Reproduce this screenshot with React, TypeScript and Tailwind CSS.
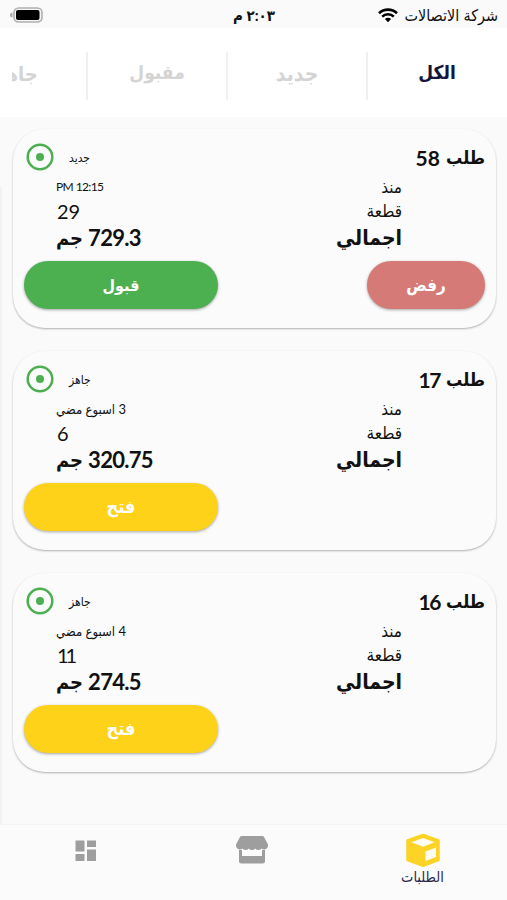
import { clsx } from 'clsx';

type Order = {
  id: number;
  status: string;
  since: string;
  pieces: number;
  total: string;
  isNew?: boolean;
};

const TABS = [
  { label: 'الكل', size: 'text-[19px]' },
  { label: 'جديد', size: 'text-[21px]' },
  { label: 'مقبول', size: 'text-[19px]' },
  { label: 'جاهز', size: 'text-[20px]' },
];

const ORDERS: Order[] = [
  { id: 58, status: 'جديد', since: '12:15 PM', pieces: 29, total: '729.3', isNew: true },
  { id: 17, status: 'جاهز', since: '3 اسبوع مضي', pieces: 6, total: '320.75' },
  { id: 16, status: 'جاهز', since: '4 اسبوع مضي', pieces: 11, total: '274.5' },
];

const StatusBar = () => (
  <div className="grid h-[28px] shrink-0 grid-cols-3 items-center bg-[#fafafa] pt-[2px] pr-[9px] pl-[10px] text-[#111]">
    <div className="flex items-center gap-[6px]">
      <span className="text-[16px] leading-none whitespace-nowrap">شركة الاتصالات</span>
      <svg className="shrink-0" width="20" height="15" viewBox="0 0 20 15" fill="none" stroke="#000">
        <path d="M1 5.2a13 13 0 0 1 18 0" strokeWidth="2.7" />
        <path d="M4.2 8.6a8.3 8.3 0 0 1 11.6 0" strokeWidth="2.7" />
        <path d="M10 14.2 6.9 11.1a4.4 4.4 0 0 1 6.2 0z" fill="#000" stroke="none" />
      </svg>
    </div>
    <span className="text-center text-[15px] leading-none font-bold">٢:٠٣ م</span>
    <div className="flex justify-end">
      <svg width="33" height="16" viewBox="0 0 33 16">
        <path d="M2.5 5.5a2.5 2.5 0 0 0 0 5z" fill="#aaa" />
        <rect x="4" y="1" width="28" height="14" rx="4.5" fill="#f4f4f4" stroke="#b0b0b0" strokeWidth="1.6" />
        <rect x="6" y="3" width="23.500" height="10" rx="2" fill="#000" />
      </svg>
    </div>
  </div>
);

const Tabs = () => (
  <div className="h-[89px] shrink-0 bg-white pl-3">
    <div className="flex h-full overflow-hidden pt-[24px] pr-px">
      {TABS.map((tab, i) => (
        <div
          key={tab.label}
          className={clsx(
            'flex h-[48px] w-[140px] shrink-0 items-center justify-center pb-[7px] font-bold',
            tab.size,
            i < TABS.length - 1 && 'border-l-2 border-[#f0f0f0]',
            i === 0 ? 'text-[#14143c]' : 'text-[#d4d4d4]',
          )}
        >
          {tab.label}
        </div>
      ))}
    </div>
  </div>
);

const OrderCard = ({ order }: { order: Order }) => (
  <div className="h-[199px] shrink-0 rounded-[32px] bg-[#fbfbfb] pt-[14px] pr-[11px] pl-[11px] shadow-[0_1px_2px_rgba(0,0,0,0.3)]">
    <div className="flex h-[28px] items-center justify-between">
      <h2 className="flex items-center gap-[6px] leading-none font-bold">
        <span className="text-[18px]">طلب</span>
        <span className={clsx('text-[21px]', order.id < 20 && 'tracking-[-1.5px]')}>{order.id}</span>
      </h2>
      <div className="flex items-center">
        <span className="pt-px text-[12px] leading-none">{order.status}</span>
        <svg className="mr-[15px] ml-[2px]" width="28" height="28" viewBox="0 0 28 28">
          <circle cx="14" cy="14" r="12.300" fill="none" stroke="#4caf50" strokeWidth="2.500" />
          <circle cx="14" cy="14" r="4" fill="#4caf50" />
        </svg>
      </div>
    </div>

    <div className="mt-1 flex justify-between pr-[83px]">
      <div>
        <p className="h-[24px] text-[17px] leading-[24px]">منذ</p>
        <p className="h-[24px] text-[17px] leading-[24px]">قطعة</p>
        <p className="h-[29px] text-[21px] leading-[27px] font-bold">اجمالي</p>
      </div>
      {/* القيم محاذاة لليسار */}
      <div className="pl-[32px] text-left">
        <p className={clsx('h-[24px] leading-[24px]', order.isNew ? 'text-[12px] tracking-[-0.6px]' : 'text-[13px]')}>
          {order.since}
        </p>
        <p className={clsx('h-[24px] pl-px text-[20px] leading-[24px]', order.pieces === 11 && 'tracking-[-3px]')}>
          {order.pieces}
        </p>
        <p className="flex h-[29px] items-center justify-end gap-[5px] leading-[29px] font-bold">
          <span className="text-[22px] tracking-[-0.7px]">{order.total}</span>
          <span className="text-[20px]">جم</span>
        </p>
      </div>
    </div>

    <div className="mt-[9px] flex justify-between font-bold text-white">
      {order.isNew ? (
        <button className="h-[48px] w-[118px] rounded-full bg-[#d57a76] pb-px text-[17px] shadow-[0_1px_3px_rgba(0,0,0,0.35)]">
          رفض
        </button>
      ) : (
        <span />
      )}
      <button
        className={clsx(
          'h-[48px] w-[194px] rounded-full pb-px shadow-[0_1px_3px_rgba(0,0,0,0.35)]',
          order.isNew ? 'bg-[#4caf50] text-[16px]' : 'bg-[#ffd21a] text-[18px]',
        )}
      >
        {order.isNew ? 'قبول' : 'فتح'}
      </button>
    </div>
  </div>
);

const BottomNav = () => (
  <nav className="flex h-[76px] shrink-0 border-t border-[#f4f4f4] bg-[#fbfbfb]">
    <div className="flex w-[169px] flex-col items-center pt-[8px]">
      <svg width="36" height="35" viewBox="0 0 36 35">
        <path
          d="M18 2 33.500 7.500v19.500L18 32.800 2.500 27V7.500z"
          fill="#fdd325"
          stroke="#fdd325"
          strokeWidth="2.500"
          strokeLinejoin="round"
        />
        <path d="M18 5 29.500 9.300 18 13.800 6.500 9.300z" fill="#fffdf2" />
        <path d="M20.500 18.500 31 14.600v9.400L20.500 28z" fill="#fffdf2" />
      </svg>
      <span className="mt-[1px] text-[14.5px] leading-[16px] text-[#2c2848]">الطلبات</span>
    </div>
    <div className="flex w-[169px] justify-center pt-[11px] pr-[3px]">
      <svg width="34" height="28" viewBox="0 0 34 28" fill="#9e9e9e">
        <path d="M6.500 0h21q1 0 1.500 1l4 7.500v1.500a4 4 0 0 1-6.500 2.500 4 4 0 0 1-6.300 0 4 4 0 0 1-6.400 0 4 4 0 0 1-6.300 0A4 4 0 0 1 1 10V8.500L5 1q.5-1 1.500-1z" />
        <path d="M4 14h3v6h20v-6h3v11a2.500 2.500 0 0 1-2.500 2.500h-21A2.500 2.500 0 0 1 4 25z" />
      </svg>
    </div>
    <div className="flex w-[169px] justify-center pt-[15px] pl-[3px]">
      <svg width="22" height="22" viewBox="0 0 22 22" fill="#9e9e9e">
        <path d="M.5.500H9.500v11H.5zM12 .5h9v6.500h-9zM.5 14H9.500v7H.5zM12 9.500h9v11.500h-9z" />
      </svg>
    </div>
  </nav>
);

export default function App() {
  return (
    <div
      dir="rtl"
      className="flex h-[900px] w-[507px] flex-col overflow-hidden bg-[#fafafa] font-['Lato','DejaVu_Sans_Condensed','DejaVu_Sans',sans-serif] text-[#111]"
    >
      <StatusBar />
      <Tabs />
      <main className="relative flex flex-1 flex-col gap-[23px] pt-[12px] pr-[11px] pl-[13px]">
        {ORDERS.map((order) => (
          <OrderCard key={order.id} order={order} />
        ))}
        <div className="absolute top-[70px] bottom-0 left-0 w-[2px] bg-[#f2f2f2]" />
      </main>
      <BottomNav />
    </div>
  );
}
